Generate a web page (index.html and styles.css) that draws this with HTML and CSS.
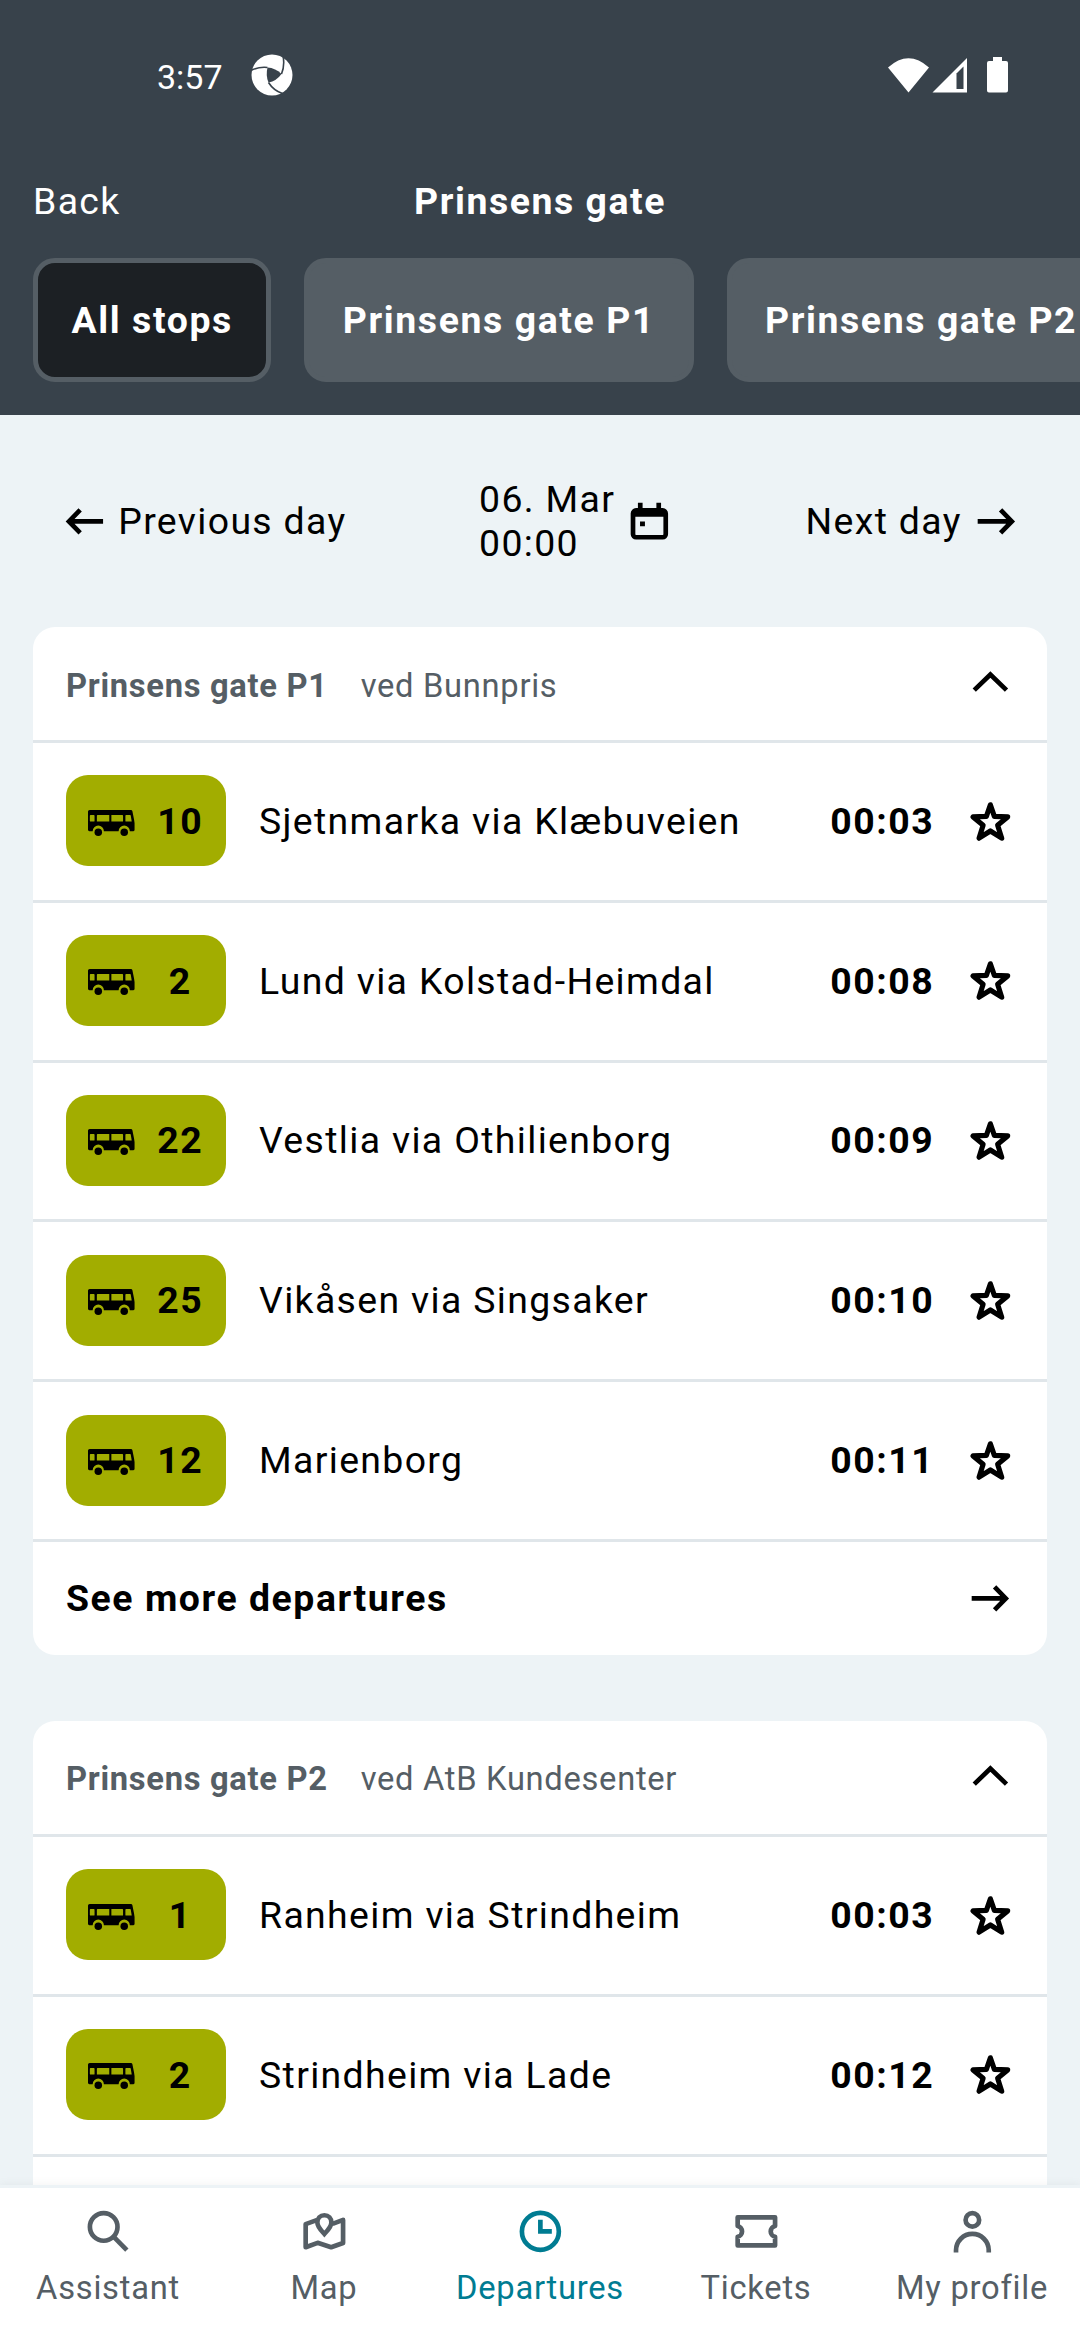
FILE: index.html
```html
<!DOCTYPE html>
<html lang="en">
<head>
<meta charset="utf-8">
<title>Prinsens gate</title>
<link rel="stylesheet" href="styles.css">
</head>
<body>
<svg class="defs" aria-hidden="true">
  <symbol id="right" viewBox="0 0 20 20"><path class="line" d="M2 10h14.4M11.8 5.1l4.8 4.9-4.8 4.9"/></symbol>
  <symbol id="left" viewBox="0 0 20 20"><path class="line" d="M18 10H3.6M8.2 5.1L3.4 10l4.8 4.9"/></symbol>
  <symbol id="up" viewBox="0 0 20 20"><path class="line" d="M3.1 12.9L10 6.2l6.900 6.700"/></symbol>
  <symbol id="star" viewBox="0 0 20 20"><path class="line round heavy" d="M10 2.9L11.700 7.850 17.400 8.100 13.100 11.650 14.850 17.200 10 14.100 5.150 17.200 6.900 11.650 2.600 8.100 8.300 7.850z"/></symbol>
  <symbol id="bus" viewBox="0 0 20 20"><path fill="currentColor" fill-rule="evenodd" d="M.7 5.100h17.600q.6 0 .7.6l1 5v2.900q0 .6-.6.6h-1.500a2.400 2.400 0 0 0-4.800 0H6.800a2.400 2.400 0 0 0-4.800 0H.6q-.6 0-.6-.6V5.800q0-.7.7-.7zM1.100 7.300q-.3 0-.3.3v2.200q0 .3.3.3h1.400q.3 0 .3-.3V7.600q0-.3-.3-.3zM4.100 7.300q-.3 0-.3.3v2.500h5.300V7.300zM10 7.300v2.800h5V7.600q0-.3-.3-.3zM16.300 7.300q-.3 0-.3.3v2.200q0 .3.3.3h2.400l-.4-2.500q0-.3-.3-.3z"/><circle fill="currentColor" cx="4.400" cy="14.700" r="1.600"/><circle fill="currentColor" cx="15.500" cy="14.700" r="1.600"/></symbol>
</svg>
<div class="screen">
  <header class="header">
    <div class="status">
      <span class="clock">3:57</span>
      <svg class="app" viewBox="0 0 42 42"><circle cx="21" cy="21" r="20.500" fill="#fff"/><path fill="#38424b" d="M16.500 13.500q8 .5 14 6.500-5 7-13 8.500-3-7-1-15z"/><path fill="none" stroke="#38424b" stroke-width="1.600" d="M0 16.500q8-4 16.500-3M32 1.500q2 10-1.500 18.500M17.500 28.500q5 8 14 11"/></svg>
      <span class="grow"></span>
      <svg class="sys" viewBox="0 0 122 38"><path fill="#fff" d="M0 11.500Q20.500-7 41 11.500L20.500 36.500zM44.500 36.500L79 2v34.500z"/><path fill="#38424b" d="M68.500 17.500L75.500 10.500v22.500h-7z"/><path fill="#fff" d="M105 1h9v4h4q2 0 2 2v27.500q0 2-2 2h-17q-2 0-2-2V7q0-2 2-2h4z"/></svg>
    </div>
    <div class="titlebar"><span class="back">Back</span><h1>Prinsens gate</h1><span></span></div>
    <div class="chips"><span class="chip active">All stops</span><span class="chip">Prinsens gate P1</span><span class="chip">Prinsens gate P2</span></div>
  </header>
  <main class="main">
    <div class="dates">
      <div class="group"><svg class="icon"><use href="#left"/></svg><span>Previous day</span></div>
      <div class="group"><span>06. Mar<br>00:00</span><svg class="icon" viewBox="0 0 20 20"><rect class="line" x="3" y="5.300" width="14" height="11.500" rx="1.300"/><path fill="currentColor" d="M3 5h14v3H3zM5.100 2h2v3h-2zM13 2h2v3h-2zM6 10h2.100v2.100H6z"/></svg></div>
      <div class="group"><span>Next day</span><svg class="icon"><use href="#right"/></svg></div>
    </div>
    <section class="card">
      <div class="cardhead"><b>Prinsens gate P1</b><span>ved Bunnpris</span><svg class="icon"><use href="#up"/></svg></div>
      <div class="row"><span class="badge"><svg class="icon"><use href="#bus"/></svg><b>10</b></span><span class="dest">Sjetnmarka via Klæbuveien</span><b>00:03</b><svg class="icon"><use href="#star"/></svg></div>
      <div class="row"><span class="badge"><svg class="icon"><use href="#bus"/></svg><b>2</b></span><span class="dest">Lund via Kolstad-Heimdal</span><b>00:08</b><svg class="icon"><use href="#star"/></svg></div>
      <div class="row"><span class="badge"><svg class="icon"><use href="#bus"/></svg><b>22</b></span><span class="dest">Vestlia via Othilienborg</span><b>00:09</b><svg class="icon"><use href="#star"/></svg></div>
      <div class="row"><span class="badge"><svg class="icon"><use href="#bus"/></svg><b>25</b></span><span class="dest">Vikåsen via Singsaker</span><b>00:10</b><svg class="icon"><use href="#star"/></svg></div>
      <div class="row"><span class="badge"><svg class="icon"><use href="#bus"/></svg><b>12</b></span><span class="dest">Marienborg</span><b>00:11</b><svg class="icon"><use href="#star"/></svg></div>
      <div class="row more"><b class="dest">See more departures</b><svg class="icon"><use href="#right"/></svg></div>
    </section>
    <section class="card">
      <div class="cardhead"><b>Prinsens gate P2</b><span>ved AtB Kundesenter</span><svg class="icon"><use href="#up"/></svg></div>
      <div class="row"><span class="badge"><svg class="icon"><use href="#bus"/></svg><b>1</b></span><span class="dest">Ranheim via Strindheim</span><b>00:03</b><svg class="icon"><use href="#star"/></svg></div>
      <div class="row"><span class="badge"><svg class="icon"><use href="#bus"/></svg><b>2</b></span><span class="dest">Strindheim via Lade</span><b>00:12</b><svg class="icon"><use href="#star"/></svg></div>
      <div class="row"></div>
    </section>
  </main>
  <nav class="nav">
    <div class="tab"><svg class="icon" viewBox="0 0 20 20"><path class="line" d="M12.100 12.100l5.800 5.900"/><circle class="line" cx="8" cy="8.100" r="5.900"/></svg><span>Assistant</span></div>
    <div class="tab"><svg class="icon" viewBox="0 0 20 20"><path class="line round" d="M6.700 5.200L2 6.900v9.900l5.100-1.900 5.800 1.900 5.100-1.800V5.100l-4.500 1.700"/><path class="line" d="M10 3.100c-1.800 0-3 1.400-3 3.100 0 1.900 1.800 3.600 3 4.900 1.200-1.300 3-3 3-4.900 0-1.700-1.200-3.100-3-3.100z"/></svg><span>Map</span></div>
    <div class="tab selected"><svg class="icon" viewBox="0 0 20 20"><circle class="line" cx="10" cy="10" r="7.900"/><path class="line" d="M10 5v5h4.900"/></svg><span>Departures</span></div>
    <div class="tab"><svg class="icon" viewBox="0 0 20 20"><path class="line round" d="M2 4h16v3.700a2.350 2.350 0 0 0 0 4.600V16H2v-3.700a2.350 2.350 0 0 0 0-4.600z"/></svg><span>Tickets</span></div>
    <div class="tab"><svg class="icon" viewBox="0 0 20 20"><circle class="line" cx="10" cy="5.100" r="2.900"/><path class="line" d="M3 19v-.9a7 7 0 0 1 14 0v.9"/></svg><span>My profile</span></div>
  </nav>
</div>
</body>
</html>
```
FILE: styles.css
```css
* { box-sizing: border-box; }
body { margin: 0; font: 37.4px/44px Roboto, sans-serif; letter-spacing: 1.35px; color: #000; }
.defs { position: absolute; width: 0; height: 0; }
.screen { width: 1080px; height: 2340px; display: flex; flex-direction: column; overflow: hidden; background: #edf3f6; }
.icon { width: 46.75px; height: 46.75px; flex: none; display: block; }
.line { fill: none; stroke: currentColor; stroke-width: 2; }
.round { stroke-linejoin: round; }
.heavy { stroke-width: 2.2; }
.grow { flex: 1; }

.header { height: 415px; flex: none; background: #38424b; color: #fff; overflow: hidden; }
.status { height: 150px; display: flex; align-items: center; padding: 0 70px 0 157px; }
.clock { font-size: 34px; letter-spacing: 0; width: 94px; padding-top: 3px; }
.app { width: 42px; height: 42px; }
.sys { width: 122px; height: 38px; }
.titlebar { height: 102px; display: grid; grid-template-columns: 1fr auto 1fr; align-items: center; padding: 0 33px; }
h1 { margin: 0; font-size: inherit; font-weight: 700; letter-spacing: 1.55px; }
.chips { display: flex; gap: 33px; margin: 6px 0 0 33px; }
.chip { flex: none; height: 124px; display: flex; align-items: center; padding: 0 33.5px; border: 5px solid #555e65; border-radius: 22px; background: #555e65; font-weight: 700; letter-spacing: 1.6px; }
.active { background: #1c2024; }

.main { flex: 1; min-height: 0; overflow: hidden; padding: 0 33px; }
.dates { height: 212px; display: flex; justify-content: space-between; align-items: center; padding: 0 27.5px; }
.group { display: flex; align-items: center; gap: 11px; }
.card { background: #fff; border-radius: 22px; margin-bottom: 66px; overflow: hidden; }
.cardhead { height: 113px; display: flex; align-items: center; gap: 33px; padding: 0 33px; font-size: 32.7px; letter-spacing: .7px; color: #555e65; }
.cardhead b, .cardhead span { padding-top: 4px; }
.cardhead .icon { margin-left: auto; color: #000; }
.row { height: 159.8px; display: flex; align-items: center; gap: 33px; padding: 0 33px 1px; border-top: 3px solid #e0e6ea; }
.row b { letter-spacing: 1.55px; }
.more { height: 116px; }
.dest { flex: 1; }
.badge { width: 160px; height: 91px; display: flex; align-items: center; gap: 22px; padding: 0 22px; border-radius: 22px; background: #a2ad00; }
.badge b { flex: 1; text-align: center; }

.nav { position: relative; height: 155px; flex: none; display: flex; background: #fff; border-top: 3px solid #edf3f6; box-shadow: 0 0 10px rgba(0, 0, 0, .06); color: #555e65; font-size: 32.7px; letter-spacing: .75px; }
.tab { flex: 1; display: flex; flex-direction: column; align-items: center; padding-top: 20px; gap: 11px; white-space: nowrap; }
.selected { color: #007c92; }
```
